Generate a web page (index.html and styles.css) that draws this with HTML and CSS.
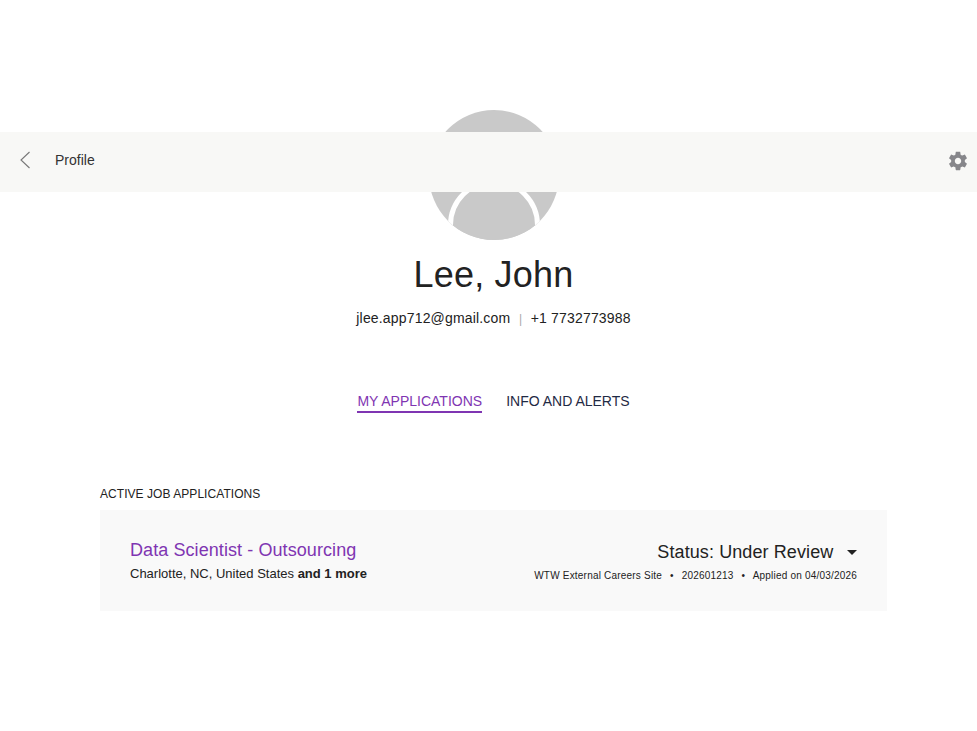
FILE: index.html
```html
<!DOCTYPE html>
<html lang="en">
<head>
  <meta charset="UTF-8">
  <title>Profile</title>
  <link rel="stylesheet" href="styles.css">
</head>
<body>
  <div class="toolbar">
    <a class="back" href="#">
      <svg width="12" height="18" viewBox="0 0 12 18"><path d="M10.5 1 L2 9 L10.5 17" fill="none" stroke="#777" stroke-width="1.1"/></svg>
    </a>
    <span class="toolbar-title">Profile</span>
    <svg class="gear" width="22" height="22" viewBox="0 0 24 24"><path fill="#86868a" d="M19.43 12.98c.04-.32.07-.64.07-.98s-.03-.66-.07-.98l2.11-1.65c.19-.15.24-.42.12-.64l-2-3.46c-.12-.22-.39-.3-.61-.22l-2.49 1c-.52-.4-1.08-.73-1.69-.98l-.38-2.65C14.46 2.18 14.25 2 14 2h-4c-.25 0-.46.18-.49.42l-.38 2.65c-.61.25-1.17.59-1.69.98l-2.49-1c-.23-.09-.49 0-.61.22l-2 3.46c-.13.22-.07.49.12.64l2.11 1.65c-.04.32-.07.65-.07.98s.03.66.07.98l-2.11 1.65c-.19.15-.24.42-.12.64l2 3.46c.12.22.39.3.61.22l2.49-1c.52.4 1.08.73 1.69.98l.38 2.65c.03.24.24.42.49.42h4c.25 0 .46-.18.49-.42l.38-2.65c.61-.25 1.17-.59 1.69-.98l2.49 1c.23.09.49 0 .61-.22l2-3.46c.12-.22.07-.49-.12-.64l-2.11-1.65zM12 15.5c-1.93 0-3.5-1.57-3.5-3.5s1.57-3.5 3.5-3.5 3.5 1.57 3.5 3.5-1.57 3.5-3.5 3.5z"/></svg>
  </div>

  <div class="page">
    <div class="profile">
      <svg class="avatar" width="130" height="130" viewBox="0 0 130 130">
        <clipPath id="avatarClip"><circle cx="65" cy="65" r="65"/></clipPath>
        <g clip-path="url(#avatarClip)">
          <rect width="130" height="130" fill="#c9c9c9"/>
          <circle cx="65" cy="115" r="43.5" fill="#c9c9c9" stroke="#fff" stroke-width="5"/>
        </g>
      </svg>
      <h1 class="name">Lee, John</h1>
      <div class="contact">
        <span>jlee.app712@gmail.com</span>
        <span class="divider">|</span>
        <span>+1 7732773988</span>
      </div>
    </div>

    <div class="tabs">
      <a class="tab active" href="#">MY APPLICATIONS</a>
      <a class="tab" href="#">INFO AND ALERTS</a>
    </div>

    <div class="applications">
      <h2 class="section-title">ACTIVE JOB APPLICATIONS</h2>
      <div class="card">
        <div class="card-left">
          <a class="job-title" href="#">Data Scientist - Outsourcing</a>
          <div class="location">Charlotte, NC, United States <strong>and 1 more</strong></div>
        </div>
        <div class="card-right">
          <div class="status">Status: Under Review <span class="caret"></span></div>
          <div class="meta">
            <span>WTW External Careers Site</span>
            <span class="dot">•</span>
            <span>202601213</span>
            <span class="dot">•</span>
            <span>Applied on 04/03/2026</span>
          </div>
        </div>
      </div>
    </div>
  </div>
</body>
</html>
```

FILE: styles.css
```css
body {
  margin: 0;
  background-color: #fff;
  color: #222;
  font-family: "Liberation Sans", Arial, sans-serif;
}

.toolbar {
  position: absolute;
  top: 132px;
  left: 0;
  right: 0;
  height: 60px;
  display: flex;
  align-items: center;
  background-color: #f8f8f6;
}

.back {
  display: flex;
  margin-left: 19px;
  margin-bottom: 4px;
}

.toolbar-title {
  margin-left: 24px;
  margin-bottom: 4px;
  font-size: 14px;
  color: #333;
}

.gear {
  margin-left: auto;
  margin-right: 8px;
  margin-bottom: 3px;
}

.page {
  padding: 110px 90px 0 100px;
}

.profile {
  display: flex;
  flex-direction: column;
  align-items: center;
}

.avatar {
  display: block;
}

.name {
  margin: 14px 0 0;
  font-size: 36px;
  line-height: 42px;
  font-weight: 400;
  letter-spacing: 0.2px;
}

.contact {
  margin-top: 12px;
  font-size: 14px;
  line-height: 20px;
  letter-spacing: 0.17px;
}

.divider {
  margin: 0 4.5px;
  color: #aaa;
  font-size: 12px;
}

.tabs {
  display: flex;
  justify-content: center;
  gap: 24px;
  margin-top: 63px;
}

.tab {
  padding-bottom: 1px;
  font-size: 14px;
  line-height: 18px;
  color: #1f2a44;
  text-decoration: none;
  border-bottom: 2px solid transparent;
}

.tab.active {
  color: #7f35b2;
  border-bottom-color: #7f35b2;
}

.applications {
  margin-top: 73px;
}

.section-title {
  margin: 0 0 8px;
  font-size: 12px;
  line-height: 16px;
  font-weight: 400;
  letter-spacing: 0.05px;
}

.card {
  display: flex;
  justify-content: space-between;
  height: 101px;
  box-sizing: border-box;
  padding: 28px 30px 0;
  background-color: #f9f9f9;
}

.job-title {
  display: block;
  font-size: 18px;
  line-height: 24px;
  letter-spacing: 0.08px;
  color: #7f35b2;
  text-decoration: none;
}

.location {
  margin-top: 4px;
  font-size: 13px;
  line-height: 16px;
}

.card-right {
  text-align: right;
}

.status {
  margin-top: 2px;
  font-size: 18px;
  line-height: 24px;
  letter-spacing: 0.1px;
}

.caret {
  display: inline-block;
  width: 0;
  height: 0;
  margin-left: 8.5px;
  vertical-align: 3px;
  border-left: 5.5px solid transparent;
  border-right: 5.5px solid transparent;
  border-top: 5px solid #222;
}

.meta {
  margin-top: 5px;
  font-size: 10px;
  line-height: 14px;
  letter-spacing: 0.2px;
}

.dot {
  margin: 0 5px;
}
```
